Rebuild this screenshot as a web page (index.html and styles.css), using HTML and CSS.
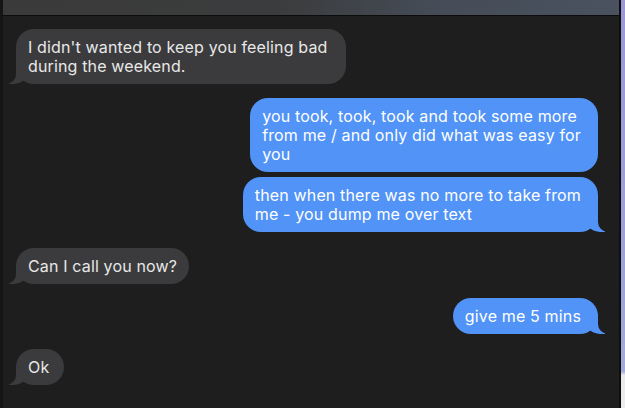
FILE: index.html
```html
<!DOCTYPE html>
<html lang="en">
<head>
<meta charset="utf-8">
<title>Messages</title>
<link rel="stylesheet" href="styles.css">
</head>
<body>
<div class="window">
  <div class="edge-left"></div>
  <div class="main">
    <div class="titlebar"></div>
    <div class="thread">
      <div class="msg them tail roomy">I didn't wanted to keep you feeling bad<br>during the weekend.</div>
      <div class="msg me gap-m">you took, took, took and took some more<br>from me / and only did what was easy for<br>you</div>
      <div class="msg me tail gap-s">then when there was no more to take from<br>me - you dump me over text</div>
      <div class="msg them tail gap-xl">Can I call you now?</div>
      <div class="msg me tail gap-m">give me 5 mins</div>
      <div class="msg them tail gap-l short">Ok</div>
    </div>
  </div>
  <div class="edge-right">
    <div class="divider"></div>
    <div class="desktop"></div>
  </div>
</div>
</body>
</html>
```
FILE: styles.css
```css
html, body {
  margin: 0;
  padding: 0;
  background: #1e1e1e;
}
body {
  width: 625px;
  height: 408px;
  overflow: hidden;
  font-family: "Inter", "Liberation Sans", sans-serif;
}
.window {
  display: flex;
  width: 625px;
  height: 408px;
}
.edge-left {
  width: 3px;
  background: #151515;
  flex: none;
}
.main {
  flex: 1;
  display: flex;
  flex-direction: column;
  background: #1e1e1e;
}
.titlebar {
  height: 15px;
  border-bottom: 1px solid #0c0c0c;
  background: linear-gradient(90deg, #3a3a3a 0%, #3b3c3d 45%, #454c57 70%, #4a5260 100%);
  flex: none;
}
.thread {
  display: flex;
  flex-direction: column;
  padding: 13px 21px 0 13px;
}
.edge-right {
  flex: none;
  display: flex;
  width: 6px;
}
.divider {
  width: 2px;
  background: #0e0e0e;
}
.desktop {
  flex: 1;
  background: linear-gradient(180deg, #9d97d6 0%, #9ea4d8 70%, #a3acd8 91%, #e9e9ec 92%, #ececee 100%);
}
.msg {
  position: relative;
  z-index: 0;
  padding: 8.5px 17px 8.5px 12px;
  border-radius: 18px;
  font-size: 16px;
  line-height: 19px;
  letter-spacing: 0.15px;
  white-space: nowrap;
}
.them {
  align-self: flex-start;
  background: #3b3b3d;
  color: #e8e8e8;
  padding-right: 12px;
}
.them.roomy {
  padding-right: 19px;
}
.them.short {
  padding-right: 15px;
}
.me {
  align-self: flex-end;
  background: #5193f6;
  color: #ffffff;
}
.gap-s { margin-top: 5px; }
.gap-m { margin-top: 14px; }
.gap-l { margin-top: 15px; }
.gap-xl { margin-top: 16px; }

.tail::before,
.tail::after {
  content: "";
  position: absolute;
  bottom: 0;
  height: 20px;
  z-index: -1;
}
.them.tail::before {
  left: -7px;
  width: 20px;
  background: #3b3b3d;
  border-bottom-right-radius: 15px;
}
.them.tail::after {
  left: -10px;
  width: 10px;
  background: #1e1e1e;
  border-bottom-right-radius: 10px;
}
.me.tail::before {
  right: -7px;
  width: 20px;
  background: #5193f6;
  border-bottom-left-radius: 15px;
}
.me.tail::after {
  right: -10px;
  width: 10px;
  background: #1e1e1e;
  border-bottom-left-radius: 10px;
}
```
